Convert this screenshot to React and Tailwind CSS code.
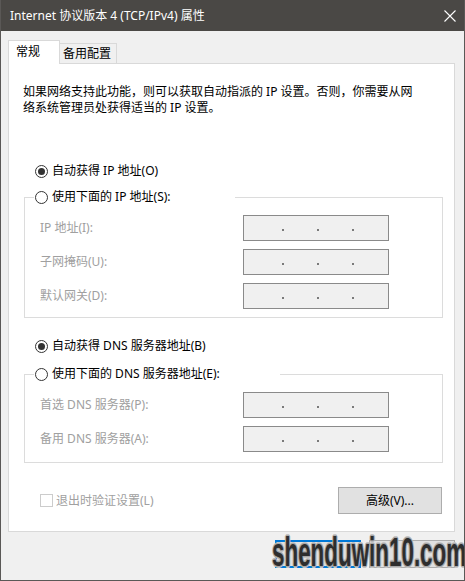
export default function App() {
  return (
    <div className="relative w-[465px] h-[581px] flex flex-col bg-[#f0f0f0] border-x border-b border-[#5a5856] font-['Noto_Sans','Noto_Sans_CJK_SC',sans-serif] text-[12px] text-black overflow-hidden">
      {/* Title bar */}
      <div className="h-[31px] shrink-0 bg-[#4a4845] flex items-center justify-between pl-[9px] pr-[8px]">
        <span className="text-white leading-[16px]">Internet 协议版本 4 (TCP/IPv4) 属性</span>
        <svg width="12" height="12" viewBox="0 0 12 12" className="block">
          <path d="M0.5 0.5 L11.5 11.5 M11.5 0.5 L0.5 11.5" stroke="#ffffff" strokeWidth="1.1" fill="none" />
        </svg>
      </div>

      {/* Body */}
      <div className="flex flex-col pl-[7px] pr-[9px] pt-[9px]">
        {/* Tabs */}
        <div className="flex items-end h-[23px]">
          <div className="relative z-10 w-[52px] h-[24px] -mb-px border border-b-0 border-[#d9d9d9] bg-white pl-[7px] leading-[22px]">
            常规
          </div>
          <div className="w-[57px] h-[20px] border-t border-r border-[#d9d9d9] bg-[#f0f0f0] pl-[3px] leading-[19px]">
            备用配置
          </div>
        </div>

        {/* Panel */}
        <div className="h-[469px] border border-[#d9d9d9] bg-white flex flex-col pl-[15px] pr-[11px] pt-[20px]">
          <div className="leading-[16px] -ml-px">
            <div>如果网络支持此功能，则可以获取自动指派的 IP 设置。否则，你需要从网</div>
            <div>络系统管理员处获得适当的 IP 设置。</div>
          </div>

          <Radio checked className="mt-[47px] ml-[11px]" label="自动获得 IP 地址(O)" />

          <fieldset className="mt-[10px] border border-[#dcdcdc] pl-[9px] pt-[10px] pb-[8px]">
            <legend className="w-[201px] pl-px">
              <Radio label="使用下面的 IP 地址(S):" />
            </legend>
            <div className="flex flex-col gap-[8px] pl-[6px]">
              <Row label="IP 地址(I):" />
              <Row label="子网掩码(U):" />
              <Row label="默认网关(D):" />
            </div>
          </fieldset>

          <Radio checked className="mt-[20px] ml-[11px]" label="自动获得 DNS 服务器地址(B)" />

          <fieldset className="mt-[12px] border border-[#dcdcdc] pl-[9px] pt-[10px] pb-[10px]">
            <legend className="w-[246px] pl-px">
              <Radio label="使用下面的 DNS 服务器地址(E):" />
            </legend>
            <div className="flex flex-col gap-[8px] pl-[6px]">
              <Row label="首选 DNS 服务器(P):" />
              <Row label="备用 DNS 服务器(A):" />
            </div>
          </fieldset>

          <div className="mt-[24px] flex items-center justify-between pl-[16px] pr-px">
            <div className="flex items-center gap-[3px] text-[#a0a0a0] leading-[16px]">
              <span className="w-[13px] h-[13px] border border-[#cccccc] bg-white" />
              <span>退出时验证设置(L)</span>
            </div>
            <div className="w-[104px] h-[27px] border border-[#adadad] bg-[#e1e1e1] flex items-center justify-center leading-[16px]">
              高级(V)...
            </div>
          </div>
        </div>

        {/* Bottom buttons (labels hidden under the watermark) */}
        <div className="mt-[8px] flex justify-end gap-[8px]">
          <div className="w-[86px] h-[28px] border-2 border-[#0078d7] bg-[#e1e1e1]" />
          <div className="w-[86px] h-[28px] border border-[#adadad] bg-[#e1e1e1]" />
        </div>
      </div>

      {/* Watermark */}
      <div className="absolute left-[271px] top-[532px] origin-left scale-x-[0.56] font-['Liberation_Sans',sans-serif] font-bold text-[40px] leading-[40px] text-[#2e2e2e] whitespace-nowrap [text-shadow:1px_1px_0_#a8a8a8,-1px_-1px_0_#a8a8a8,1px_-1px_0_#a8a8a8,-1px_1px_0_#a8a8a8,2px_0_0_#c4c4c4,-2px_0_0_#c4c4c4,0_2px_0_#c4c4c4,0_-2px_0_#c4c4c4]">
        shenduwin10.com
      </div>
    </div>
  );
}

function Radio({ checked, label, className = "" }) {
  return (
    <div className={"flex items-center gap-[4px] h-[16px] leading-[16px] " + className}>
      <span className="w-[13px] h-[13px] rounded-full border border-[#333333] bg-white flex items-center justify-center shrink-0">
        {checked && <span className="w-[7px] h-[7px] rounded-full bg-[#333333]" />}
      </span>
      <span className="whitespace-nowrap">{label}</span>
    </div>
  );
}

function Row({ label }) {
  return (
    <div className="flex items-center">
      <span className="w-[203px] text-[#a0a0a0] leading-[16px]">{label}</span>
      <IPBox />
    </div>
  );
}

function IPBox() {
  return (
    <div className="w-[146px] h-[26px] border border-[#8a8a8a] bg-[#f0f0f0] flex items-center pl-[38px] gap-[33px]">
      <span className="w-[2px] h-[2px] bg-[#7a7a7a] mt-[3px]" />
      <span className="w-[2px] h-[2px] bg-[#7a7a7a] mt-[3px]" />
      <span className="w-[2px] h-[2px] bg-[#7a7a7a] mt-[3px]" />
    </div>
  );
}
